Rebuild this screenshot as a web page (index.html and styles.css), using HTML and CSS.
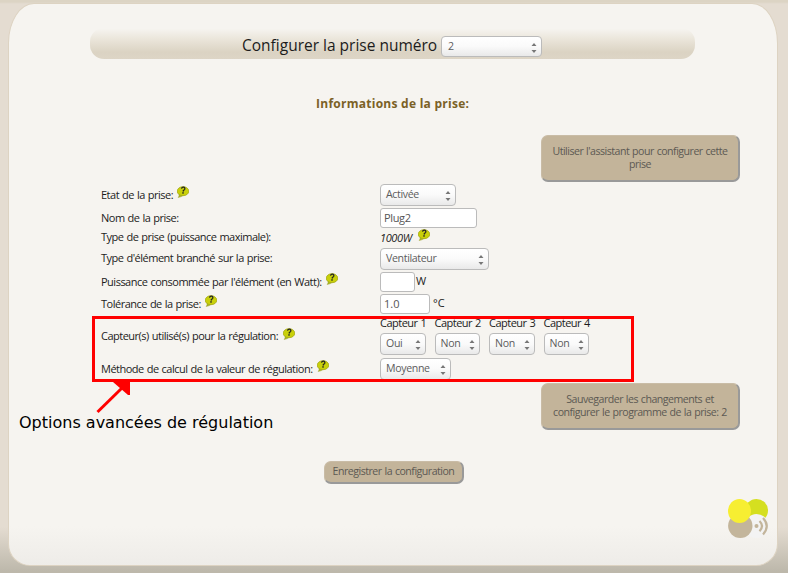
FILE: index.html
```html
<!DOCTYPE html>
<html lang="fr">
<head>
<meta charset="utf-8">
<title>Configurer la prise</title>
<link rel="stylesheet" href="styles.css">
</head>
<body>
<svg class="defs" width="0" height="0" aria-hidden="true">
  <symbol id="help" viewBox="0 0 12 12">
    <path d="M2 8 Q2.500 10 1.200 11.500 Q4.800 11 7 8.800Z" fill="#a9b51f" stroke="#9aa02c" stroke-width=".5"/>
    <ellipse cx="6" cy="5.200" rx="5.800" ry="4.500" fill="#c9d00a" stroke="#a4a91c" stroke-width=".8"/>
    <path d="M4.500 2.700 Q4.900 1 6.400 1.100 Q8.300 1.300 7.700 3.200 Q7.400 3.900 6.400 4.500 L6.100 5.500" fill="none" stroke="#222" stroke-width="1.300"/>
    <rect x="5.200" y="6.300" width="1.600" height="1.300" fill="#222"/>
  </symbol>
  <symbol id="arrows" viewBox="0 0 6 10">
    <path d="M3 0 L5.500 3 H.5Z M.5 7 H5.500 L3 10Z" fill="#777"/>
  </symbol>
</svg>
<main class="card">
  <header class="title-bar">
    <span class="title">Configurer la prise numéro</span>
    <div class="select plug"><span>2</span><svg><use href="#arrows"/></svg></div>
  </header>
  <h2>Informations de la prise:</h2>
  <div class="button wide assist">Utiliser l'assistant pour configurer cette<br>prise</div>
  <div class="form">
    <div class="row r1"><div class="label"><span>Etat de la prise:</span><svg class="help"><use href="#help"/></svg></div>
      <div class="select state"><span>Activée</span><svg><use href="#arrows"/></svg></div></div>
    <div class="row r2"><div class="label"><span>Nom de la prise:</span></div>
      <div class="input name">Plug2</div></div>
    <div class="row r3"><div class="label"><span>Type de prise (puissance maximale):</span></div>
      <div class="power"><em>1000W</em><svg class="help"><use href="#help"/></svg></div></div>
    <div class="row r4"><div class="label"><span>Type d'élément branché sur la prise:</span></div>
      <div class="select kind"><span>Ventilateur</span><svg><use href="#arrows"/></svg></div></div>
    <div class="row r5"><div class="label"><span>Puissance consommée par l'élément (en Watt):</span><svg class="help"><use href="#help"/></svg></div>
      <div class="input watt"></div><span class="unit">W</span></div>
    <div class="row r6"><div class="label"><span>Tolérance de la prise:</span><svg class="help"><use href="#help"/></svg></div>
      <div class="input tol">1.0</div><span class="unit deg">°C</span></div>
    <div class="row r7"><div class="label"><span>Capteur(s) utilisé(s) pour la régulation:</span><svg class="help"><use href="#help"/></svg></div>
      <div class="sensors">
        <div class="sensor"><span class="name-s">Capteur 1</span><div class="select"><span>Oui</span><svg><use href="#arrows"/></svg></div></div>
        <div class="sensor"><span class="name-s">Capteur 2</span><div class="select"><span>Non</span><svg><use href="#arrows"/></svg></div></div>
        <div class="sensor"><span class="name-s">Capteur 3</span><div class="select"><span>Non</span><svg><use href="#arrows"/></svg></div></div>
        <div class="sensor"><span class="name-s">Capteur 4</span><div class="select"><span>Non</span><svg><use href="#arrows"/></svg></div></div>
      </div></div>
    <div class="row r8"><div class="label"><span>Méthode de calcul de la valeur de régulation:</span><svg class="help"><use href="#help"/></svg></div>
      <div class="select method"><span>Moyenne</span><svg><use href="#arrows"/></svg></div></div>
  </div>
  <div class="button wide save">Sauvegarder les changements et<br>configurer le programme de la prise: 2</div>
  <div class="button submit">Enregistrer la configuration</div>
</main>
<svg class="logo" viewBox="0 0 42 42">
  <circle cx="28.500" cy="11.500" r="11.500" fill="#d5df20"/>
  <circle cx="28.500" cy="27" r="12" fill="#f3f3f3"/>
  <circle cx="12.300" cy="26.800" r="12.200" fill="#c3b59b"/>
  <ellipse cx="11.500" cy="12" rx="11.500" ry="12" fill="#f7ee32"/>
  <circle cx="28.500" cy="27" r="2" fill="#c3b59b"/>
  <path d="M31.500 22 Q36.500 27 31.500 32.300 M35 19 Q42.500 27 35 35.500" fill="none" stroke="#c3b59b" stroke-width="2.200"/>
</svg>
<div class="callout-box"></div>
<svg class="callout-arrow" viewBox="0 0 36 34"><path d="M1.500 31 L27 6" stroke="#f00" stroke-width="3"/><path d="M18 1 H34 V14 H32 L17 1Z" fill="#f00"/></svg>
<div class="callout-text">Options avancées de régulation</div>
</body>
</html>
```
FILE: styles.css
```css
* { box-sizing: border-box; }
body {
  margin: 0; height: 573px; padding: 3px 10px 7px 8px; position: relative; overflow: hidden;
  font: 11px/19px "Open Sans", sans-serif; letter-spacing: -.5px; word-spacing: .6px; color: #1c1c1c;
  background: linear-gradient(#dcd4c4 0 2px, #e4dcd1 4px 527px, #bdb8ab 571px);
}
.defs { position: absolute; }
.card {
  height: 563px; border: 1px solid #ddd3c2; border-radius: 26px 26px 22px 22px / 40px 40px 22px 22px;
  background: linear-gradient(#f6f4f0 0 522px, #eeece8 562px);
  display: flex; flex-direction: column;
}
.title-bar {
  margin: 24px 0 0 81px; width: 605px; height: 31px; border-radius: 14px;
  background: linear-gradient(#f6f4f0 2%, #ebe6db 35%, #dbd3c3 78%, #ddd5c6);
  display: flex; padding-left: 152px;
}
.title { width: 196px; margin-right: 3px; font-size: 15.5px; line-height: 34px; letter-spacing: 0; word-spacing: 0; white-space: nowrap; color: #1c1c1c; }
.select {
  height: 22px; border: 1px solid #bbb; border-radius: 4px; padding: 0 4px 0 5px;
  background: linear-gradient(#fff, #fafafa 50%, #e9e9e9); color: #5c5c5c; line-height: 19px;
  font-size: 10.6px; letter-spacing: -.35px; display: flex; justify-content: space-between; white-space: nowrap;
}
.select svg { width: 6px; height: 10px; margin-top: 6px; flex: none; }
.plug { width: 101px; height: 21px; margin-top: 8px; padding-left: 6px; }
h2 { margin: 34px 0 0 307px; font-size: 12px; line-height: 21px; height: 20px; letter-spacing: .26px; word-spacing: 0; color: #7b6126; white-space: nowrap; }
.button {
  background: #c3b49a; color: #5c5953; text-align: center; border-radius: 7px; line-height: 13px; font-size: 10.6px;
  border: 1px solid #c9bca6; border-right: 2px solid #999; border-bottom: 2px solid #999; white-space: nowrap;
}
.wide { width: 199px; height: 47px; margin-left: 532px; padding: 9px 0 0; }
.assist { margin-top: 22px; }
.form { margin: 2px 0 0 92px; }
.row { display: flex; align-items: flex-start; }
.label { width: 279px; display: flex; line-height: 21px; white-space: nowrap; }
.help { width: 12px; height: 12px; margin: 2px 0 0 4px; flex: none; }
.r1 { height: 24px; } .r2 { height: 20px; } .r3 { height: 20px; } .r4 { height: 24px; }
.r5 { height: 22px; } .r6 { height: 24px; } .r7 { height: 40px; } .r8 { height: 25px; }
.r2 .label, .r5 .label, .r6 .label { line-height: 19px; }
.r3 .label, .r4 .label { line-height: 18px; }
.r4 .label { line-height: 20px; }
.r6 .help { margin-top: 1px; }
.r5 .help { margin-top: 1px; }
.r7 .label { line-height: 36px; }
.r7 .help { margin: 10px 0 0 5px; }
.input { height: 20px; border: 1px solid #bbb; border-radius: 3px; background: #fff; color: #555; padding-left: 3px; line-height: 17px; }
.name { width: 97px; letter-spacing: -.35px; } .watt { width: 35px; } .tol { width: 50px; letter-spacing: 0; }
.state { width: 76px; } .kind { width: 109px; } .method { width: 71px; }
.power { display: flex; letter-spacing: -.4px; }
.power .help { margin: 1px 0 0 6px; }
.unit { margin-left: 1px; line-height: 17px; }
.deg { margin-left: 3px; letter-spacing: 0; }
.sensors { display: flex; gap: 9px; }
.sensor { width: 45.5px; white-space: nowrap; }
.name-s { display: block; height: 15px; line-height: 10px; }
.save { margin-top: 0; }
.submit { width: 140px; height: 23px; margin: 31px 0 0 315px; line-height: 19px; }
.logo { position: absolute; left: 728px; top: 499px; width: 42px; height: 42px; }
.callout-box { position: absolute; left: 92px; top: 316px; width: 542px; height: 66px; border: 3px solid #f00; }
.callout-arrow { position: absolute; left: 96px; top: 381px; width: 36px; height: 34px; }
.callout-text { position: absolute; left: 19px; top: 413px; font: 16px/20px "DejaVu Sans", sans-serif; letter-spacing: 0; word-spacing: 0; color: #000; white-space: nowrap; }
```
